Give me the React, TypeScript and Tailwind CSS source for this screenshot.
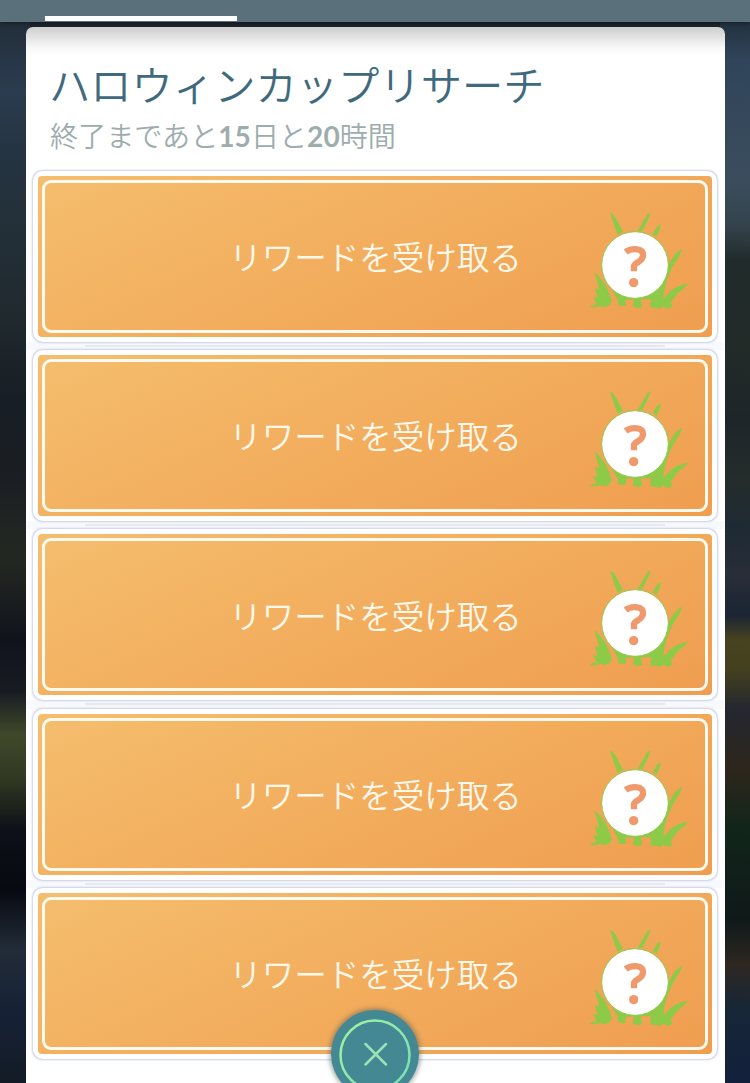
import React from "react";

const FONT = "font-['Lato','Noto_Sans_CJK_JP',sans-serif]";

const rewards = [1, 2, 3, 4, 5];

const GrassIcon = () => (
  <svg className="w-[120px] h-[125px]" viewBox="0 0 360 375">
    <g fill="#8dca48">
      <path d="M90 38 L98 42 L107 54 L129 95 L113 104 L102 75 Z" />
      <path d="M212 37 L205 57 L187 93 L173 93 L190 63 L202 43 Z" />
      <path d="M243 72 L240 86 L230 110 L218 102 L231 80 Z" />
      <path d="M307 145 L299 166 L276 203 L262 236 L254 268 L249 294 L256 291 C272 268 292 256 324 251 C316 264 302 270 290 284 L272 308 L277 320 L265 327 L250 320 L238 326 L210 321 L213 300 L205 283 L252 238 L268 190 L285 162 Z" />
      <path d="M43 217 L55 227 L77 256 L90 285 L96 306 L88 316 L76 322 L62 318 L46 322 L28 322 L36 316 L50 312 L39 292 L52 294 L45 264 L58 268 Z" />
      <path d="M97 272 L230 280 L216 298 L182 298 L187 320 L174 325 L158 319 L162 298 L138 299 L137 318 L116 317 L112 297 Z" />
    </g>
    <circle cx="165" cy="195" r="100" fill="#fff" stroke="#8dca48" strokeWidth="3" />
    <path
      d="M137 156 C150 146 164 147 172 148 C184 149 190 157 189 167 C188 187 162 187 162 199 L162 214"
      fill="none"
      stroke="#f0996c"
      strokeWidth="19"
    />
    <circle cx="161" cy="248" r="14" fill="#f0996c" />
  </svg>
);

const RewardCard = () => (
  <button className="relative block w-[684px] h-[171px] shrink-0 rounded-[10px] bg-white p-[5px] shadow-[0_0_2px_0.5px_#c9cfe6]">
    <div className="h-full rounded-[4px] bg-linear-[155deg] from-[#f4be6e] via-[#f2ad5d] to-[#f09d4f] p-1">
      <div className="flex h-[153px] items-center justify-center rounded-[9px] border-[3px] border-[#fffaf0]">
        <span className="pt-[4px] pl-[1px] text-[32.5px] leading-none font-[350] text-[#fff8eb]">リワードを受け取る</span>
      </div>
    </div>
    <div className="absolute right-[17px] top-[29px]">
      <GrassIcon />
    </div>
  </button>
);

const CloseButton = () => (
  <button className="absolute left-[331px] top-[1010px] flex size-[88px] items-center justify-center rounded-full bg-[#438893] shadow-[0_0_4px_2px_rgba(70,90,90,0.45)]">
    <svg className="size-[88px]" viewBox="0 0 88 88" fill="none">
      <defs>
        <linearGradient id="ring" x1="0" y1="0" x2="1" y2="1">
          <stop offset="0" stopColor="#a5f2a0" />
          <stop offset="1" stopColor="#75dfb5" />
        </linearGradient>
      </defs>
      <circle cx="44" cy="45" r="34.5" stroke="url(#ring)" strokeWidth="2.5" />
      <path d="M34.5 34 L55 54.5 M55 34 L34.5 54.5" stroke="#9ae3b4" strokeWidth="2.5" strokeLinecap="round" />
    </svg>
  </button>
);

export default function App() {
  return (
    <div className={`relative h-[1083px] w-[750px] overflow-hidden bg-[#1c242c] ${FONT}`}>
      {/* Blurred scenery on both sides of the panel */}
      <div className="absolute inset-y-0 left-0 w-[30px] bg-[linear-gradient(180deg,#222e3a_22px,#2b3c50_90px,#253443_150px,#233038_230px,#20292e_320px,#171e25_400px,#1a1e23_470px,#242822_560px,#11131c_640px,#171b22_690px,#3f4929_735px,#303822_780px,#0e1019_830px,#080a12_890px,#222c38_950px,#162136_1010px,#131c26_1083px)]" />
      <div className="absolute inset-y-0 right-0 w-[30px] bg-[linear-gradient(180deg,#233140_22px,#30445a_60px,#3b4d5d_180px,#34434d_225px,#212b2b_260px,#222b28_350px,#1d2529_420px,#242d2b_480px,#1e2a34_530px,#292d38_575px,#1b2534_615px,#47421f_640px,#43401f_670px,#242630_710px,#2d261c_770px,#11251a_830px,#101919_920px,#2e2722_965px,#172637_1010px,#12203c_1083px)]" />

      <div className="relative flex flex-col">
        <header className="h-[22px] shrink-0 bg-[#5a717c] pl-[45px] pt-[16px] shadow-[0_2px_4px_rgba(0,0,0,0.3)]">
          <div className="h-[5px] w-[192px] bg-white" />
        </header>

        <main className="mt-[5px] ml-[26px] h-[1070px] w-[699px] rounded-t-[7px] bg-[linear-gradient(180deg,#cecece_0px,#e2e2e2_10px,#f7f7f7_20px,#fff_28px)]">
          <div className="h-[144px] pl-[23px] pt-[36px]">
            <h1 className="text-[41.3px] leading-[44px] font-[350] whitespace-nowrap text-[#3f6a7e]">ハロウィンカップリサーチ</h1>
            <p className="mt-[15px] pl-px text-[28.1px] leading-[28px] font-[350] whitespace-nowrap text-[#9dadad]">
              終了まであと<b className="font-bold">15</b>日と<b className="font-bold">20</b>時間
            </p>
          </div>

          <div className="flex flex-col items-center pr-px">
            {rewards.map((id, index) => (
              <React.Fragment key={id}>
                {index > 0 && (
                  <div className="flex h-[8.2px] w-full shrink-0 items-center justify-center bg-[#f8f9fc]">
                    <div className="h-[2px] w-[580px] bg-[#e5eaee]" />
                  </div>
                )}
                <RewardCard />
              </React.Fragment>
            ))}
          </div>
        </main>
      </div>

      <CloseButton />
    </div>
  );
}
